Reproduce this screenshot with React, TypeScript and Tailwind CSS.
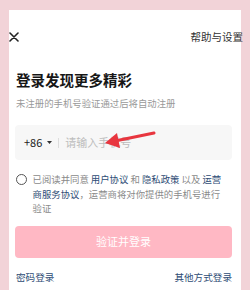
const font = { fontFamily: '"Noto Sans CJK SC", "Noto Sans", sans-serif' };

function PhoneInput() {
  return (
    <div className="relative flex h-[35px] items-center rounded-[4px] bg-[#f7f7f7] pl-[9px]">
      <span className="text-[11px] leading-none text-[#222]">+86</span>
      <svg className="ml-[5px]" width="5" height="3" viewBox="0 0 5 3">
        <polygon points="0,0 5,0 2.5,3" fill="#333" />
      </svg>
      <span className="ml-[6px] h-[10px] w-px bg-[#dddddd]" />
      <span className="ml-[6px] text-[11px] leading-none text-[#bdbdbd]">请输入手机号</span>
      {/* red pointer drawn on the screenshot */}
      <svg
        className="pointer-events-none absolute left-0 top-0"
        width="217"
        height="35"
        viewBox="0 0 217 35"
      >
        <line x1="139" y1="8" x2="100" y2="16" stroke="#e8363f" strokeWidth="3" strokeLinecap="round" />
        <polygon points="90,18 102,8 105,23" fill="#e8363f" />
      </svg>
    </div>
  );
}

export default function App() {
  return (
    <div className="h-[290px] w-[250px] overflow-hidden bg-[#f2d3d8] px-[9px] pt-[10px]" style={font}>
      <div className="h-[280px] w-[232px] bg-white">
        <div className="flex h-[22px] translate-y-[16px] items-center justify-between">
          <svg width="10" height="10" viewBox="0 0 10 10" className="ml-0">
            <path d="M1 1 L9 9 M9 1 L1 9" stroke="#222" strokeWidth="1.6" strokeLinecap="round" />
          </svg>
          <span className="-mr-[2px] text-[10.5px] leading-none text-[#333]">帮助与设置</span>
        </div>

        <div className="pl-[6px] pr-[9px] pt-[38px]">
          <h1 className="ml-[1px] text-[14.5px] font-bold leading-[20px] text-[#161616]">登录发现更多精彩</h1>
          <p className="ml-[1px] mt-[6px] text-[9.4px] leading-[14px] text-[#999]">
            未注册的手机号验证通过后将自动注册
          </p>

          <div className="mt-[15px]">
            <PhoneInput />
          </div>

          <div className="mt-[12px] flex">
            <span className="ml-[1px] mt-[2px] h-[10.5px] w-[10.5px] shrink-0 rounded-full border border-[#555]" />
            <p className="ml-[6px] w-[193px] text-[9.4px] leading-[14.5px] text-[#8a8a8a]">
              已阅读并同意 <span className="text-[#2d4b74]">用户协议</span> 和{' '}
              <span className="text-[#2d4b74]">隐私政策</span> 以及{' '}
              <span className="text-[#2d4b74]">运营商服务协议</span>，运营商将对你提供的手机号进行验证
            </p>
          </div>

          <button
            type="button"
            className="mt-[10px] flex h-[32px] w-full items-center justify-center rounded-[4px] bg-[#ffb8c4] text-[11px] text-white"
          >
            验证并登录
          </button>

          <div className="mt-[12px] flex items-center justify-between text-[9.6px] leading-[14px] text-[#2d4b74]">
            <span className="ml-[1px]">密码登录</span>
            <span>其他方式登录</span>
          </div>
        </div>
      </div>
    </div>
  );
}
